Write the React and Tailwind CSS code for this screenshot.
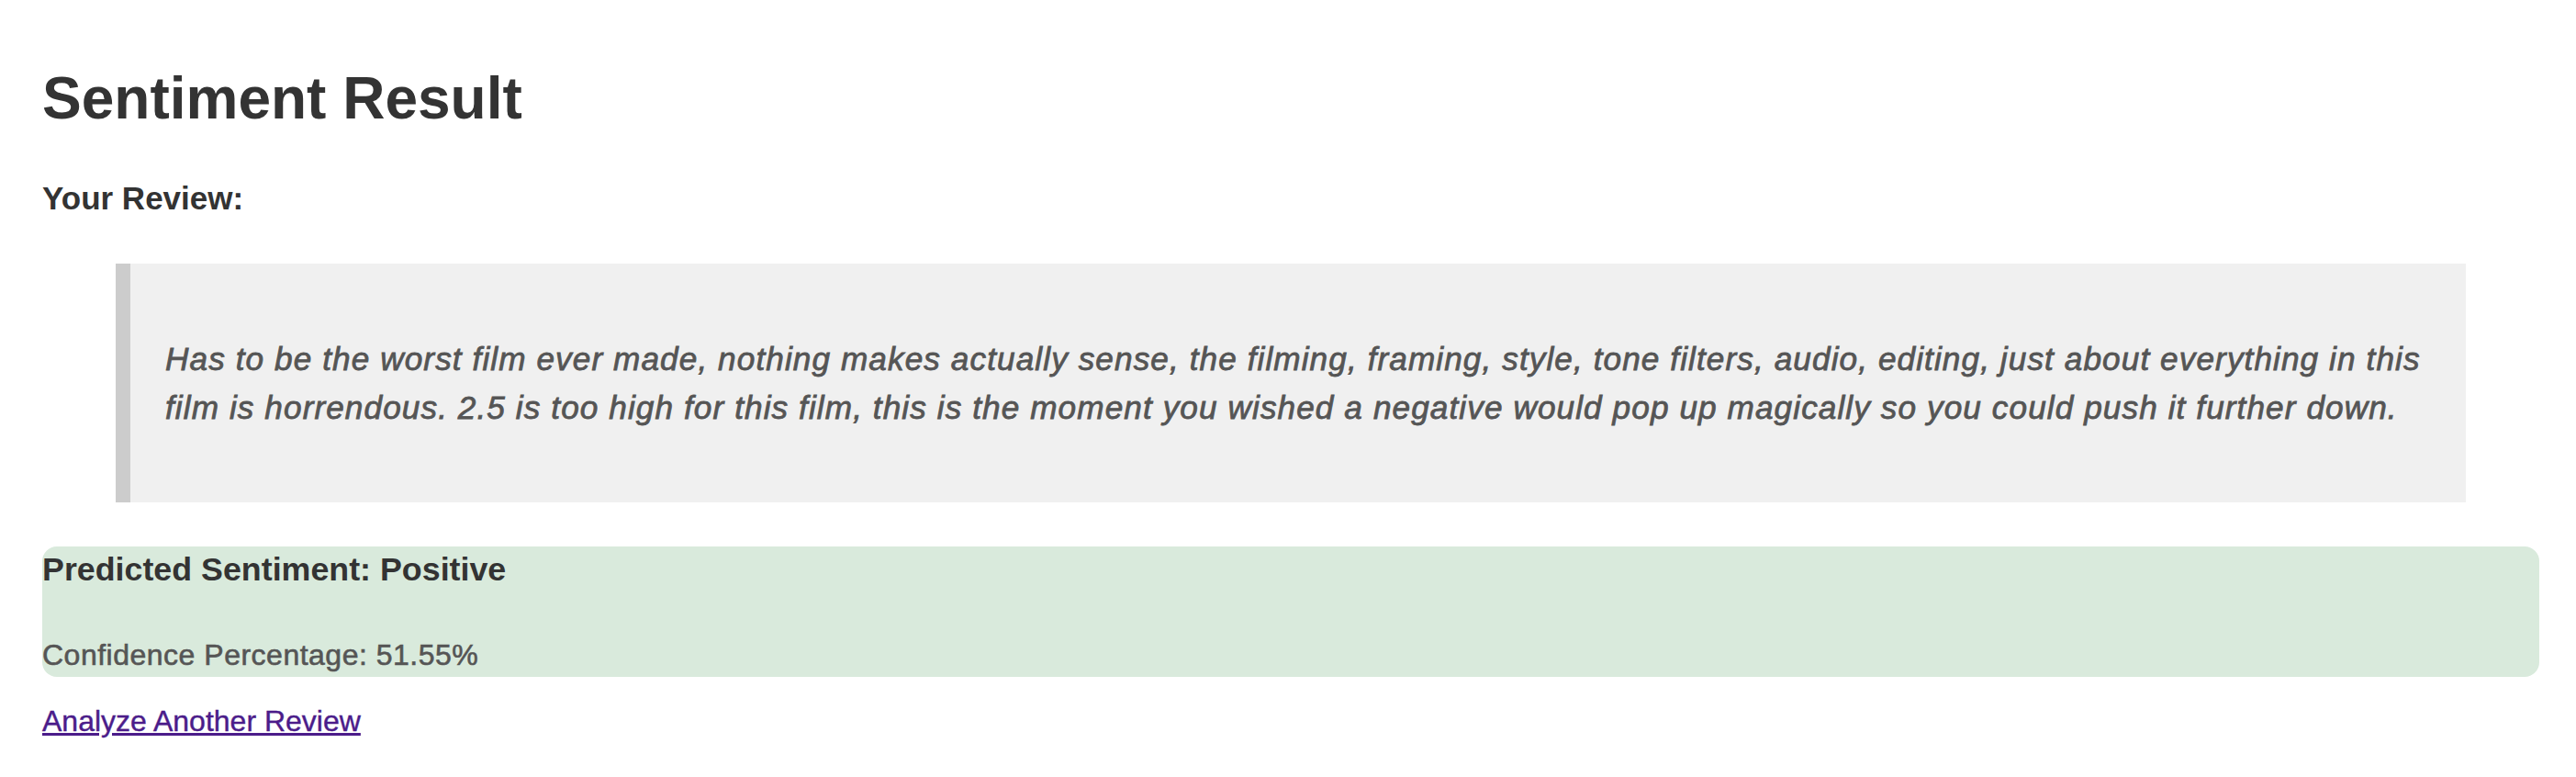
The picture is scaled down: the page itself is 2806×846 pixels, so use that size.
export default function App() {
  return (
    <div
      className="min-h-screen bg-white pl-[46px] pr-[40px] pt-[70px] pb-[40px] text-[#333]"
      style={{ fontFamily: '"Liberation Sans", Arial, Helvetica, sans-serif' }}
    >
      <h1 className="m-0 text-[64px] leading-[74px] font-bold text-[#333]">Sentiment Result</h1>
      <h3 className="mt-[52px] text-[35px] leading-[40px] font-bold text-[#333]">Your Review:</h3>
      <blockquote className="mt-[51px] mx-[80px] border-l-[16px] border-[#cccccc] bg-[#f0f0f0] pl-[38px] pr-[40px] py-[77px]">
        <p className="m-0 text-[35.2px] leading-[53px] italic tracking-[1.08px] text-[#555] [-webkit-text-stroke:0.8px_#555]">
          Has to be the worst film ever made, nothing makes actually sense, the filming, framing, style, tone filters, audio, editing, just about everything in this film is horrendous. 2.5 is too high for this film, this is the moment you wished a negative would pop up magically so you could push it further down.
        </p>
      </blockquote>
      <div className="mt-[48px] h-[142px] rounded-[16px] bg-[#d9eadc] pt-[4.5px]">
        <h3 className="m-0 text-[35.8px] leading-[40px] font-bold text-[#333]">Predicted Sentiment: Positive</h3>
        <p className="mt-[55px] text-[32px] leading-[37px] tracking-[0.5px] text-[#555] [-webkit-text-stroke:0.6px_#555]">Confidence Percentage: 51.55%</p>
      </div>
      <div className="mt-[30px]">
        <a href="#" className="text-[32px] leading-[37px] text-[#4b1c8a] underline [-webkit-text-stroke:0.4px_#4b1c8a]">
          Analyze Another Review
        </a>
      </div>
    </div>
  );
}
